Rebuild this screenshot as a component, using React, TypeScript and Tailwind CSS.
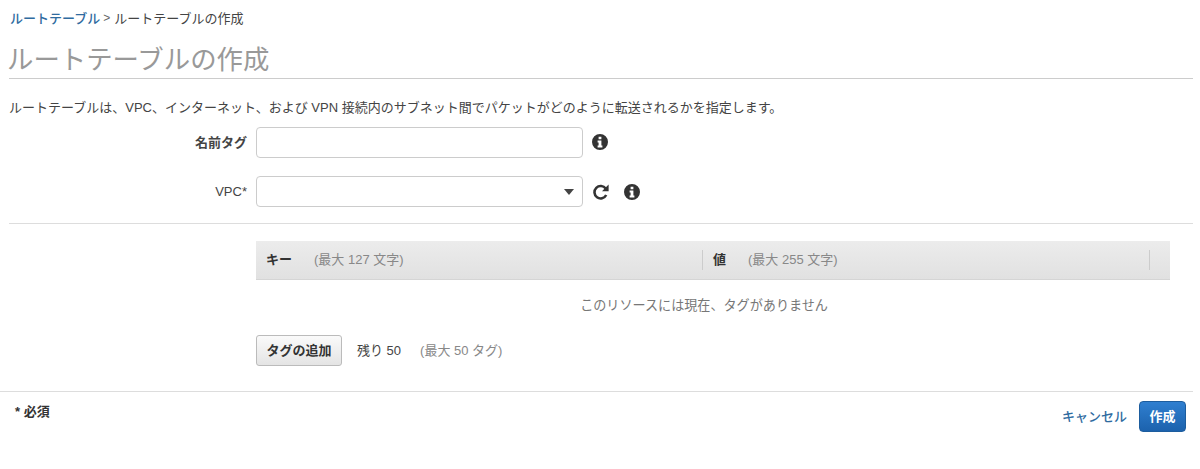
import React from 'react';

const fontStack = "font-['Liberation_Sans','Noto_Sans_CJK_JP',sans-serif]";

// solid info dot, same glyph in both rows
const InfoIcon: React.FC = () => (
  <svg viewBox="0 0 16 16" className="h-[16px] w-[16px]" fill="#333">
    <path
      fillRule="evenodd"
      d="M8 0a8 8 0 1 0 0 16A8 8 0 0 0 8 0ZM6.6 2.8h2.8v2.4H6.6ZM5.6 6.4h3.8v5.2h1v2H5.6v-2h1V8.4h-1Z"
    />
  </svg>
);

const RefreshIcon: React.FC = () => (
  <svg viewBox="0 0 18 18" className="h-[18px] w-[18px]" fill="none">
    <path d="M14.2 12a6.2 6.2 0 1 1-.5-6.4" stroke="#333" strokeWidth="2.6" />
    <path d="M16.6 1.6v6.6H10Z" fill="#333" />
  </svg>
);

export default function App() {
  return (
    <div className={`${fontStack} h-[469px] w-[1200px] overflow-hidden bg-white text-[#333]`}>
      <div className="pl-[9px] pr-[7px] pt-[10px]">
        <div className="flex h-[17px] items-center pl-[1px] text-[13px] leading-[17px] text-[#444]">
          <a className="font-medium text-[#2f6b9f]">ルートテーブル</a>
          <span className="ml-[3px] mr-[4px] text-[12px] text-[#666]">&gt;</span>
          <span>ルートテーブルの作成</span>
        </div>
        <div className="mt-[15px] border-b border-[#ccc] pt-[1px]">
          <h1 className="-ml-[2px] text-[26.4px] font-normal leading-[35px] text-[#999]">
            ルートテーブルの作成
          </h1>
        </div>
        <p className="mt-[20px] text-[13px] leading-[17px] text-[#444]">
          ルートテーブルは、VPC、インターネット、および VPN 接続内のサブネット間でパケットがどのように転送されるかを指定します。
        </p>

        <div className="mt-[11px] flex h-[31px] items-center">
          <label className="w-[238px] text-right text-[13px] font-bold text-[#444]">名前タグ</label>
          <input className="ml-[9px] h-[31px] w-[327px] rounded-[4px] border border-[#ccc] bg-white" />
          <span className="ml-[9px] -translate-y-[1px]">
            <InfoIcon />
          </span>
        </div>

        <div className="mt-[18px] flex h-[31px] items-center">
          <label className="w-[238px] text-right text-[13px] text-[#444]">VPC*</label>
          <div className="ml-[9px] flex h-[31px] w-[327px] items-center justify-end rounded-[4px] border border-[#ccc] bg-white pr-[8px]">
            <span className="h-0 w-0 border-x-[5px] border-t-[6px] border-x-transparent border-t-[#444]" />
          </div>
          <span className="ml-[9px]">
            <RefreshIcon />
          </span>
          <span className="ml-[14px]">
            <InfoIcon />
          </span>
        </div>

        <div className="mt-[16px] border-t border-[#ddd]" />

        <div className="ml-[247px] mr-[23px] mt-[17px]">
          <div className="flex h-[39px] items-center border-b border-[#d5d5d5] bg-gradient-to-b from-[#ececec] to-[#e1e1e1] text-[13px]">
            <div className="flex h-[20px] w-[447px] items-center border-r border-[#ccc] pl-[10px]">
              <span className="w-[48px] font-bold text-[#333]">キー</span>
              <span className="text-[#888]">(最大 127 文字)</span>
            </div>
            <div className="flex h-[20px] w-[447px] items-center border-r border-[#ccc] pl-[10px]">
              <span className="w-[35px] font-bold text-[#333]">値</span>
              <span className="text-[#888]">(最大 255 文字)</span>
            </div>
          </div>
          <p className="mt-[17px] pr-[18px] text-center text-[13.1px] leading-[18px] text-[#777]">
            このリソースには現在、タグがありません
          </p>
          <div className="mt-[20px] flex items-center text-[13px]">
            <button className="h-[31px] w-[86px] rounded-[3px] border border-[#bbb] bg-gradient-to-b from-[#fafafa] to-[#e4e4e4] font-bold text-[#333]">
              タグの追加
            </button>
            <span className="ml-[15px] text-[#444]">残り 50</span>
            <span className="ml-[19px] text-[#888]">(最大 50 タグ)</span>
          </div>
        </div>
      </div>

      <div className="mr-[7px] mt-[25px] flex h-[42px] items-start justify-between border-t border-[#ddd]">
        <span className="ml-[15px] mt-[11px] text-[13px] font-bold leading-[17px] text-[#333]">* 必須</span>
        <div className="mr-[7px] mt-[9px] flex items-center">
          <a className="text-[13px] font-medium text-[#2f6b9f]">キャンセル</a>
          <button className="ml-[12px] h-[31px] w-[47px] rounded-[4px] border border-[#1d5d9e] bg-gradient-to-b from-[#2f7fd0] to-[#1c62ad] text-[13px] font-bold text-white">
            作成
          </button>
        </div>
      </div>
    </div>
  );
}
